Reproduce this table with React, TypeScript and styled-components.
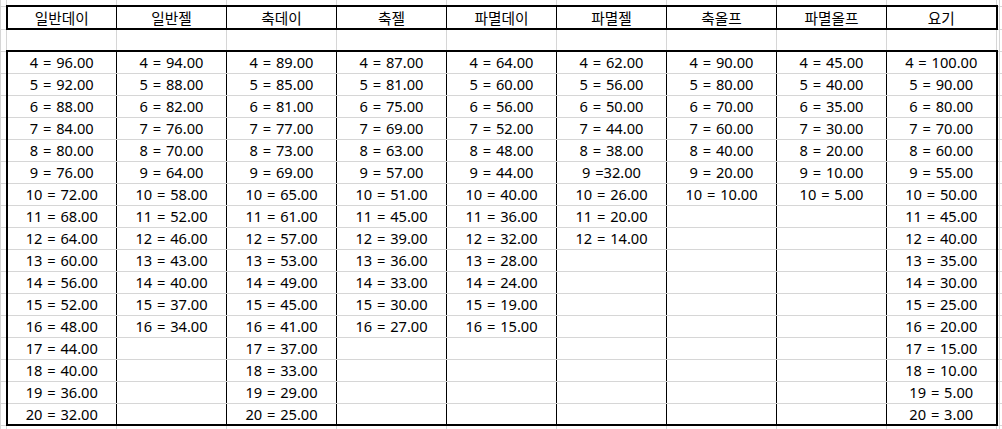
import styled, { createGlobalStyle, css } from "styled-components";

const GlobalStyle = createGlobalStyle`
  html, body {
    margin: 0;
    padding: 0;
    background: #ffffff;
    overflow: hidden;
  }
  body {
    font-family: "Noto Sans", "Noto Sans CJK KR", sans-serif;
    color: #000;
  }
`;

type Column = { title: string; values: string[] };

const line = (start: number, pairs: number[]) =>
  pairs.map((v, i) => `${start + i} = ${v.toFixed(2)}`);

const columns: Column[] = [
  { title: "일반데이", values: line(4, [96, 92, 88, 84, 80, 76, 72, 68, 64, 60, 56, 52, 48, 44, 40, 36, 32]) },
  { title: "일반젤", values: line(4, [94, 88, 82, 76, 70, 64, 58, 52, 46, 43, 40, 37, 34]) },
  { title: "축데이", values: line(4, [89, 85, 81, 77, 73, 69, 65, 61, 57, 53, 49, 45, 41, 37, 33, 29, 25]) },
  { title: "축젤", values: line(4, [87, 81, 75, 69, 63, 57, 51, 45, 39, 36, 33, 30, 27]) },
  { title: "파멸데이", values: line(4, [64, 60, 56, 52, 48, 44, 40, 36, 32, 28, 24, 19, 15]) },
  {
    title: "파멸젤",
    values: [
      "4 = 62.00",
      "5 = 56.00",
      "6 = 50.00",
      "7 = 44.00",
      "8 = 38.00",
      "9 =32.00",
      "10 = 26.00",
      "11 = 20.00",
      "12 = 14.00",
    ],
  },
  { title: "축올프", values: line(4, [90, 80, 70, 60, 40, 20, 10]) },
  { title: "파멸올프", values: line(4, [45, 40, 35, 30, 20, 10, 5]) },
  { title: "요기", values: line(4, [100, 90, 80, 70, 60, 55, 50, 45, 40, 35, 30, 25, 20, 15, 10, 5, 3]) },
];

const DATA_ROWS = 17;
const GRID = "#d6d6d6";
const INK = "#000";

const Sheet = styled.table`
  border-collapse: collapse;
  table-layout: fixed;
  width: 1002px;
  font-size: 14.67px;
  line-height: 20px;
`;

const Col = styled.col<{ $w: number }>`
  width: ${(p) => p.$w}px;
`;

const Row = styled.tr<{ $h: number }>`
  height: ${(p) => p.$h}px;
`;

type Kind = "stub" | "head" | "blank" | "data";

const Cell = styled.td<{
  $kind: Kind;
  $first?: boolean;
  $last?: boolean;
  $firstRow?: boolean;
  $lastRow?: boolean;
  $edgeTop?: boolean;
}>`
  padding: 0;
  border: 1px solid ${GRID};
  text-align: center;
  vertical-align: middle;
  white-space: pre;
  overflow: hidden;
  ${(p) => p.$edgeTop && css`border-top: 0;`}
  ${(p) =>
    p.$kind === "head" &&
    css`
      border-top: 2px solid ${INK};
      border-bottom: 2px solid ${INK};
      border-left: ${p.$first ? 2 : 1}px solid ${INK};
      border-right: ${p.$last ? 2 : 1}px solid ${INK};
      padding-top: 1px;
    `}
  ${(p) =>
    p.$kind === "data" &&
    css`
      word-spacing: 1px;
      border-left: ${p.$first ? 2 : 1}px solid ${INK};
      border-right: ${p.$last ? 2 : 1}px solid ${INK};
      ${p.$firstRow && `border-top: 2px solid ${INK};`}
      ${p.$lastRow && `border-bottom: 2px solid ${INK};`}
    `}
`;

function StubCells({ top }: { top?: boolean }) {
  return <Cell $kind="stub" $edgeTop={top} />;
}

function TailCells({ top }: { top?: boolean }) {
  return (
    <>
      <Cell $kind="stub" $edgeTop={top} />
      <Cell $kind="stub" $edgeTop={top} />
    </>
  );
}

export default function App() {
  const rows = Array.from({ length: DATA_ROWS }, (_, i) => i);
  return (
    <>
      <GlobalStyle />
      <Sheet>
        <colgroup>
          <Col $w={6} />
          {columns.map((c) => (
            <Col key={c.title} $w={110} />
          ))}
          <Col $w={3} />
          <Col $w={3} />
        </colgroup>
        <tbody>
          <Row $h={6}>
            <StubCells top />
            {columns.map((c) => (
              <Cell key={c.title} $kind="stub" $edgeTop />
            ))}
            <TailCells top />
          </Row>
          <Row $h={23}>
            <StubCells />
            {columns.map((c, i) => (
              <Cell key={c.title} $kind="head" $first={i === 0} $last={i === columns.length - 1}>
                {c.title}
              </Cell>
            ))}
            <TailCells />
          </Row>
          <Row $h={22}>
            <StubCells />
            {columns.map((c) => (
              <Cell key={c.title} $kind="blank" />
            ))}
            <TailCells />
          </Row>
          {rows.map((r) => (
            <Row key={r} $h={22}>
              <StubCells />
              {columns.map((c, i) => (
                <Cell
                  key={c.title}
                  $kind="data"
                  $first={i === 0}
                  $last={i === columns.length - 1}
                  $firstRow={r === 0}
                  $lastRow={r === DATA_ROWS - 1}
                >
                  {c.values[r] ?? ""}
                </Cell>
              ))}
              <TailCells />
            </Row>
          ))}
          <Row $h={22}>
            <StubCells />
            {columns.map((c) => (
              <Cell key={c.title} $kind="blank" />
            ))}
            <TailCells />
          </Row>
        </tbody>
      </Sheet>
    </>
  );
}
